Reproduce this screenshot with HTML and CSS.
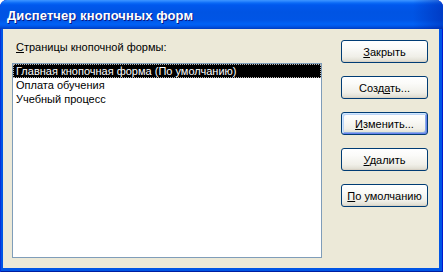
FILE: index.html
```html
<!DOCTYPE html>
<html lang="ru">
<head>
    <meta charset="UTF-8">
    <title>Диспетчер кнопочных форм</title>
    <link rel="stylesheet" href="styles.css">
</head>
<body>
    <div class="window">
        <div class="titlebar">
            <span class="title">Диспетчер кнопочных форм</span>
        </div>
        <div class="client">
            <div class="pages">
                <div class="pages-label"><u>С</u>траницы кнопочной формы:</div>
                <div class="listbox">
                    <div class="item selected">Главная кнопочная форма (По умолчанию)</div>
                    <div class="item">Оплата обучения</div>
                    <div class="item">Учебный процесс</div>
                </div>
            </div>
            <div class="actions">
                <button class="btn"><u>З</u>акрыть</button>
                <button class="btn">Созд<u>а</u>ть...</button>
                <button class="btn focused"><u>И</u>зменить...</button>
                <button class="btn"><u>У</u>далить</button>
                <button class="btn"><u>П</u>о умолчанию</button>
            </div>
        </div>
    </div>
</body>
</html>
```

FILE: styles.css
```css
html, body {
    margin: 0;
    padding: 0;
    background: #fff;
}

body {
    font-family: 'Liberation Sans', Arial, sans-serif;
    font-size: 11px;
    color: #000;
}

.window {
    width: 443px;
    height: 272px;
    display: flex;
    flex-direction: column;
    background: #0055e5;
    border-radius: 7px 7px 0 0;
    box-shadow: inset -1px 0 0 #0019cf, inset 1px 0 0 #0831d9, inset 0 -1px 0 #001ea0;
    overflow: hidden;
}

/* Заголовок окна */
.titlebar {
    height: 29px;
    flex: none;
    display: flex;
    align-items: center;
    padding: 0 7px;
    background: linear-gradient(to bottom,
        #3d95ff 0px, #2e89ff 1px, #0a6af6 3px, #0058ee 5px,
        #0054e3 12px, #0055e6 20px, #0062f6 24px, #0058eb 26px, #0046cf 28px, #003dc2 29px);
    border-radius: 7px 7px 0 0;
    position: relative;
}

.titlebar::after {
    content: "";
    position: absolute;
    top: 0;
    right: 0;
    bottom: 0;
    width: 30px;
    background: linear-gradient(to right, rgba(0, 40, 180, 0), rgba(0, 30, 160, 0.45));
    border-top-right-radius: 7px;
}

.title {
    color: #fff;
    font-weight: bold;
    font-size: 13px;
    letter-spacing: 0.1px;
    text-shadow: 1px 1px 0 #0a1883;
    margin-top: 1px;
}

/* Рабочая область */
.client {
    flex: 1;
    margin: 0 4px 4px 3px;
    background: #ece9d8;
    display: flex;
    padding: 11px 11px 0 9px;
    gap: 19px;
}

.pages {
    width: 310px;
    display: flex;
    flex-direction: column;
}

.pages-label {
    height: 14px;
    line-height: 14px;
    padding-left: 4px;
    margin-bottom: 9px;
}

.listbox {
    height: 193px;
    background: #fff;
    border: 1px solid #7f9db9;
}

.item {
    height: 14px;
    line-height: 14px;
    padding-left: 3px;
    white-space: nowrap;
    box-sizing: border-box;
}

.item.selected {
    background: #000;
    color: #fff;
    border: 1px dotted #b8b8b8;
    line-height: 12px;
    padding-left: 2px;
}

/* Кнопки */
.actions {
    display: flex;
    flex-direction: column;
    gap: 13px;
}

.btn {
    width: 87px;
    height: 23px;
    padding: 0;
    font-family: inherit;
    font-size: 11px;
    color: #000;
    border: 1px solid #003c74;
    border-radius: 3px;
    background: linear-gradient(to bottom, #ffffff 0%, #fbfbf9 30%, #f0efe8 75%, #e3e1d6 92%, #d6d0c5 100%);
    box-shadow: inset 0 -1px 0 #d8d2c6;
}

.btn.focused {
    box-shadow: inset 1px 1px 0 #cee7ff, inset -1px -1px 0 #6982ee, inset 2px 2px 0 #bcd4f6, inset -2px -2px 0 #89ade4;
}
```
